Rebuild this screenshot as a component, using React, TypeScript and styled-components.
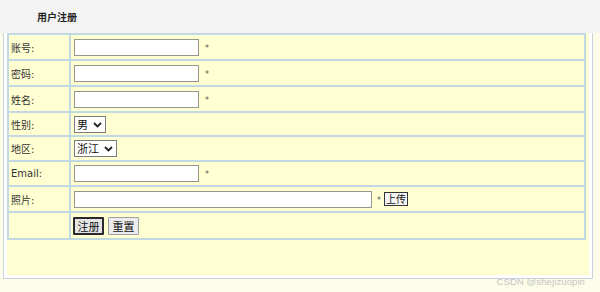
import React from 'react';
import styled, { createGlobalStyle } from 'styled-components';

const Global = createGlobalStyle`
  html, body { margin: 0; padding: 0; background: #fdfde9; }
  body {
    font-family: "DejaVu Sans", "Noto Sans CJK SC", sans-serif;
    font-size: 10px;
    color: #333;
  }
`;

const Page = styled.div`
  position: relative;
  width: 600px;
  height: 292px;
  overflow: hidden;
`;

const Header = styled.div`
  height: 33px;
  box-sizing: border-box;
  background: #f3f3f3;
  padding-left: 37px;
  display: flex;
  align-items: center;
  font-family: "Noto Sans CJK SC", sans-serif;
  font-weight: bold;
  font-size: 10px;
  color: #222;
`;

const Panel = styled.div`
  margin-left: 3px;
  width: 590px;
  box-sizing: border-box;
  border: 1px solid #c9d2de;
  border-top: none;
  background: #fff;
  padding: 0 3px 3px 3px;
`;

const Inner = styled.div`
  background: #ffffd1;
  height: 242px;
  padding-right: 3px;
`;

const Table = styled.div`
  border: 2px solid #c0d9e2;
  border-bottom: none;
`;

const Row = styled.div<{ $h: number }>`
  display: grid;
  grid-template-columns: 62px 1fr;
  height: ${(p) => p.$h}px;
  box-sizing: border-box;
  border-bottom: 2px solid #c0d9e2;
`;

const Label = styled.div`
  box-sizing: border-box;
  border-right: 2px solid #c0d9e2;
  padding-left: 2px;
  display: flex;
  align-items: center;
  color: #333;
`;

const Field = styled.div`
  display: flex;
  align-items: center;
  padding-left: 3px;
`;

const TextInput = styled.input<{ $w: number }>`
  width: ${(p) => p.$w}px;
  height: 17px;
  box-sizing: border-box;
  border: 1px solid #98968a;
  background: #fff;
  padding: 0 2px;
  margin: 0;
  font-size: 10px;
  outline: none;
`;

const Star = styled.span<{ $gap: number }>`
  margin-left: ${(p) => p.$gap}px;
  font-size: 8px;
  color: #555;
  position: relative;
  top: 1px;
`;

const SelectBox = styled.div<{ $w: number }>`
  position: relative;
  width: ${(p) => p.$w}px;
  height: 17px;
  box-sizing: border-box;
  border: 1px solid #7c7c7c;
  background: #fff;
  display: flex;
  align-items: center;
`;

const Select = styled.select`
  appearance: none;
  -webkit-appearance: none;
  border: none;
  background: transparent;
  width: 100%;
  height: 100%;
  padding: 0 0 0 2px;
  margin: 0;
  font-family: "Noto Sans CJK SC", sans-serif;
  font-size: 11px;
  color: #111;
  outline: none;
  line-height: 15px;
`;

const Chevron = styled.svg`
  position: absolute;
  right: 3px;
  top: 5px;
  pointer-events: none;
`;

const Btn = styled.button<{ $primary?: boolean }>`
  height: 18px;
  width: 31px;
  box-sizing: border-box;
  padding: 0;
  margin: 0;
  font-family: "Noto Sans CJK SC", sans-serif;
  font-size: 11px;
  line-height: 14px;
  color: #111;
  background: ${(p) => (p.$primary ? '#e4e4e4' : '#ececec')};
  border: ${(p) => (p.$primary ? '2px solid #2a2a2a' : '1px solid #a0a0a0')};
  border-radius: 1px;
`;

const Buttons = styled.div`
  display: flex;
  gap: 4px;
  margin-left: -1px;
`;

const Upload = styled.button`
  height: 14px;
  width: 24px;
  box-sizing: border-box;
  margin-left: 3px;
  padding: 0;
  font-family: "Noto Sans CJK SC", sans-serif;
  font-size: 10px;
  line-height: 12px;
  color: #111;
  background: #f6f6f6;
  border: 1px solid #333;
  border-radius: 0;
`;

const Watermark = styled.div`
  position: absolute;
  right: 15px;
  bottom: 5px;
  font-family: "Liberation Sans", sans-serif;
  font-size: 9.5px;
  color: #c4c4c4;
  letter-spacing: 0.1px;
`;

const ChevronIcon = () => (
  <Chevron width="9" height="6" viewBox="0 0 9 6">
    <path d="M1 1 L4.5 4.5 L8 1" fill="none" stroke="#222" strokeWidth="1.8" />
  </Chevron>
);

export default function App() {
  return (
    <Page>
      <Global />
      <Header>用户注册</Header>
      <Panel>
        <Inner>
          <Table>
            <Row $h={26}>
              <Label>账号:</Label>
              <Field>
                <TextInput $w={125} />
                <Star $gap={6}>*</Star>
              </Field>
            </Row>
            <Row $h={26}>
              <Label>密码:</Label>
              <Field>
                <TextInput $w={125} type="password" />
                <Star $gap={6}>*</Star>
              </Field>
            </Row>
            <Row $h={26}>
              <Label>姓名:</Label>
              <Field>
                <TextInput $w={125} />
                <Star $gap={6}>*</Star>
              </Field>
            </Row>
            <Row $h={24}>
              <Label>性别:</Label>
              <Field>
                <SelectBox $w={32}>
                  <Select defaultValue="男">
                    <option>男</option>
                    <option>女</option>
                  </Select>
                  <ChevronIcon />
                </SelectBox>
              </Field>
            </Row>
            <Row $h={25}>
              <Label>地区:</Label>
              <Field>
                <SelectBox $w={43}>
                  <Select defaultValue="浙江">
                    <option>浙江</option>
                    <option>江苏</option>
                  </Select>
                  <ChevronIcon />
                </SelectBox>
              </Field>
            </Row>
            <Row $h={25}>
              <Label>Email:</Label>
              <Field>
                <TextInput $w={125} />
                <Star $gap={6}>*</Star>
              </Field>
            </Row>
            <Row $h={26}>
              <Label>照片:</Label>
              <Field>
                <TextInput $w={298} />
                <Star $gap={5}>*</Star>
                <Upload>上传</Upload>
              </Field>
            </Row>
            <Row $h={27}>
              <Label />
              <Field>
                <Buttons>
                  <Btn $primary>注册</Btn>
                  <Btn>重置</Btn>
                </Buttons>
              </Field>
            </Row>
          </Table>
        </Inner>
      </Panel>
      <Watermark>CSDN @shejizuopin</Watermark>
    </Page>
  );
}
